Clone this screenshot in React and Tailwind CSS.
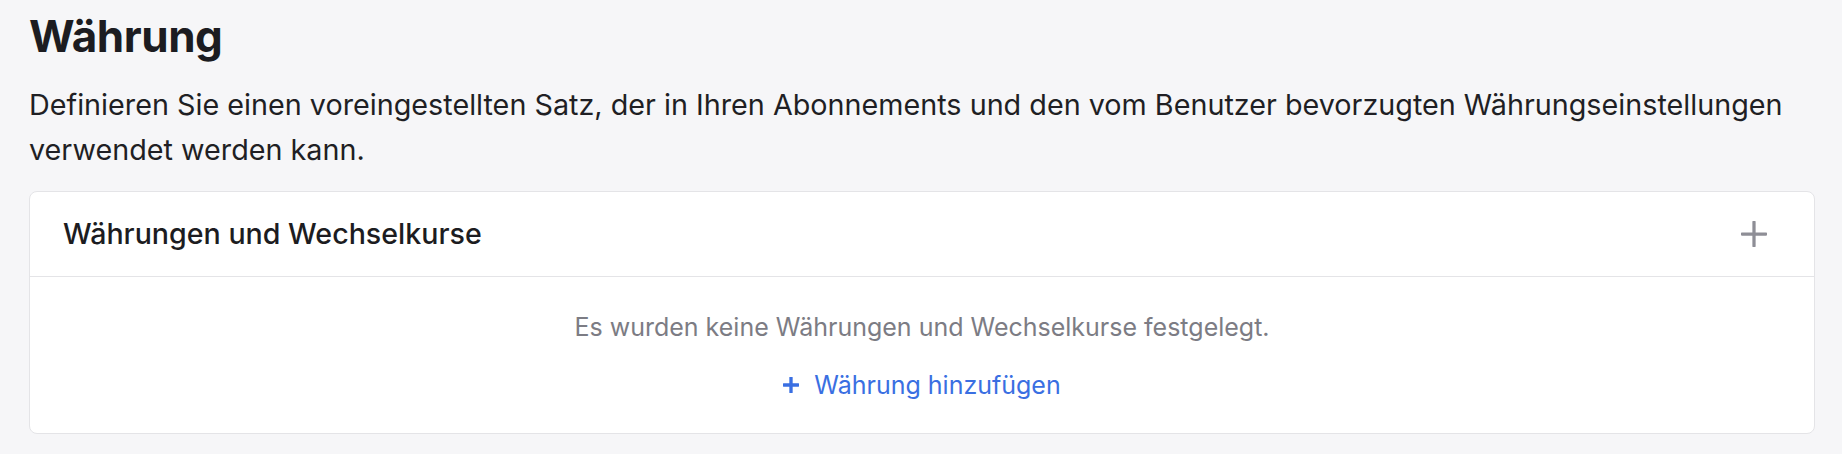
function PlusIcon({ className, stroke }) {
	return (
		<svg viewBox="0 0 24 24" fill="none" className={className}>
			<path
				d="M12 1v22M1 12h22"
				stroke="currentColor"
				strokeWidth={stroke}
				strokeLinecap="round"
			/>
		</svg>
	);
}

export default function App() {
	return (
		<div className="min-h-[454px] w-full bg-[#f6f6f8] pl-[29px] pr-[27px] pt-[6px] font-['Inter',sans-serif] text-[#1c1c21]">
			<h1 className="text-[44px] font-bold leading-[60px] tracking-[-0.01em]">
				Währung
			</h1>
			<p className="mt-[16px] text-[28.75px] leading-[45px] text-[#1f1f24]">
				Definieren Sie einen voreingestellten Satz, der in Ihren Abonnements
				und den vom Benutzer bevorzugten Währungseinstellungen verwendet werden
				kann.
			</p>

			<div className="mt-[19px] rounded-[8px] border border-[#e4e4e7] bg-white">
				<div className="flex h-[85px] items-center justify-between border-b border-[#e4e4e7] pl-[33px] pr-[47px]">
					<h2 className="text-[28.6px] font-medium text-[#1c1c21]">
						Währungen und Wechselkurse
					</h2>
					<PlusIcon className="h-[26px] w-[26px] text-[#8e8e96]" stroke={3} />
				</div>
				<div className="flex flex-col items-center pt-[33px] pb-[31px]">
					<p className="text-[25px] leading-[34px] text-[#7c7c84]">
						Es wurden keine Währungen und Wechselkurse festgelegt.
					</p>
					<button className="mt-[24px] flex items-center gap-[15px] text-[25px] leading-[34px] text-[#3a6fe2]">
						<PlusIcon className="h-[16px] w-[16px]" stroke={5} />
						Währung hinzufügen
					</button>
				</div>
			</div>
		</div>
	);
}
